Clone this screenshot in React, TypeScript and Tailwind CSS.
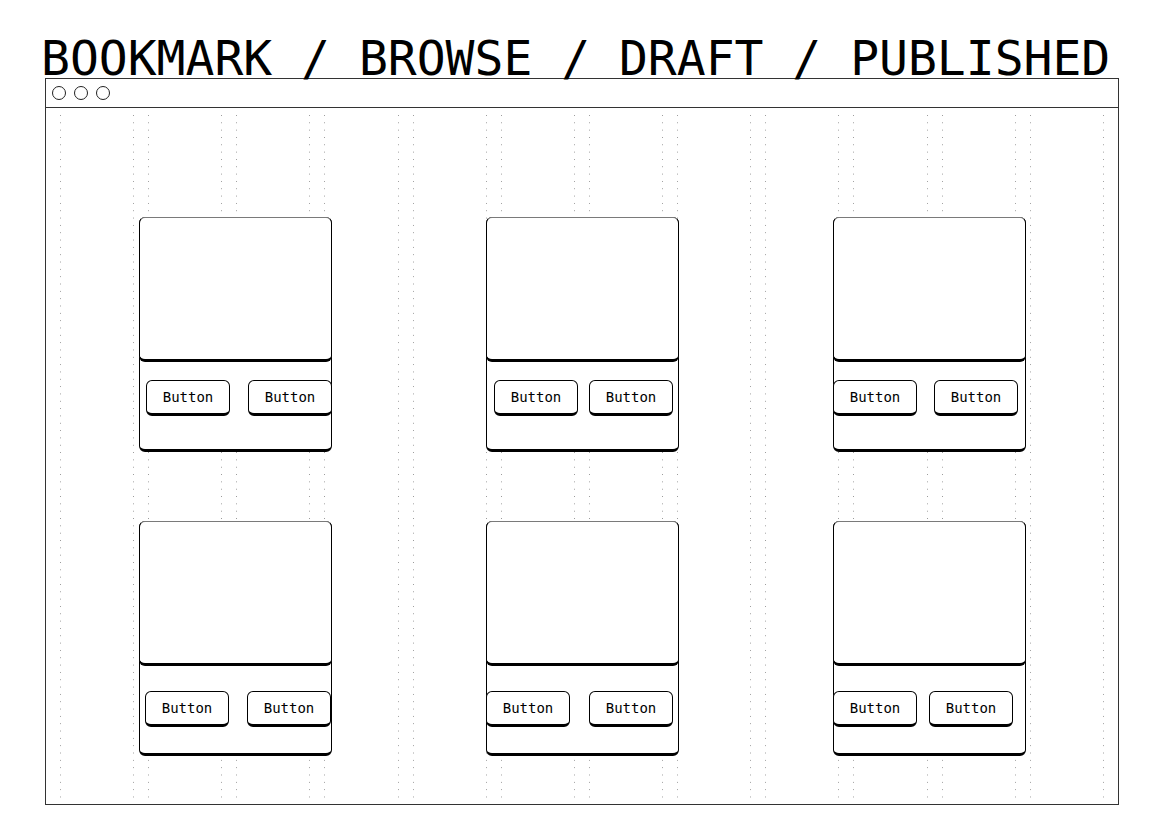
import * as React from "react";

type CardSpec = {
  row: string; // classes for the button row (offset + gap + top margin)
};

// button rows are a little uneven in the sketch, keep each one as drawn
const cards: CardSpec[] = [
  { row: "mt-[18px] pl-[6px] gap-[18px]" },
  { row: "mt-[18px] pl-[7px] gap-[11px]" },
  { row: "mt-[18px] -ml-px gap-[17px]" },
  { row: "mt-[25px] pl-[5px] gap-[18px]" },
  { row: "mt-[25px] -ml-px gap-[19px]" },
  { row: "mt-[25px] -ml-px gap-[12px]" },
];

function SketchButton() {
  return (
    <div className="flex h-[36px] w-[84px] shrink-0 items-center justify-center rounded-[6px] border border-b-[3px] border-black bg-white text-[14px] text-black">
      Button
    </div>
  );
}

function Card({ spec }: { spec: CardSpec }) {
  return (
    <div className="relative z-10 flex h-[235px] w-[193px] flex-col rounded-[6px] border border-b-[3px] border-black bg-white">
      {/* image placeholder */}
      <div className="-mx-px -mt-px h-[145px] rounded-[6px] border border-b-[3px] border-black border-t-[#7a7a7a] bg-white" />
      <div className={`flex ${spec.row}`}>
        <SketchButton />
        <SketchButton />
      </div>
    </div>
  );
}

export default function App() {
  return (
    <div className="h-[830px] w-[1158px] bg-white font-['DejaVu_Sans_Mono',monospace] text-black">
      <h1 className="pl-[41px] pt-[38px] text-[48px] font-normal leading-[40px] tracking-normal">
        BOOKMARK / BROWSE / DRAFT / PUBLISHED
      </h1>

      {/* browser window */}
      <div className="ml-[45px] flex h-[727px] w-[1074px] flex-col border border-[#333]">
        <div className="flex h-[29px] items-center gap-[8px] border-b border-[#333] pl-[6px]">
          <span className="h-[14px] w-[14px] rounded-full border border-[#222]" />
          <span className="h-[14px] w-[14px] rounded-full border border-[#222]" />
          <span className="h-[14px] w-[14px] rounded-full border border-[#222]" />
        </div>

        <div className="relative flex-1">
          {/* 12 column layout guide */}
          <div className="absolute inset-x-0 bottom-[6px] top-[7px] grid grid-cols-12 gap-x-[14px] px-[14px]">
            {Array.from({ length: 12 }).map((_, i) => (
              <div
                key={i}
                className="[background-image:linear-gradient(#999_1px,transparent_1px),linear-gradient(#999_1px,transparent_1px)] [background-position:left_top,right_top] [background-repeat:repeat-y] [background-size:1px_7.33px]"
              />
            ))}
          </div>

          <div className="relative grid grid-cols-[193px_193px_193px] gap-x-[154px] gap-y-[69px] pl-[93px] pt-[109px]">
            {cards.map((c, i) => (
              <Card key={i} spec={c} />
            ))}
          </div>
        </div>
      </div>
    </div>
  );
}
